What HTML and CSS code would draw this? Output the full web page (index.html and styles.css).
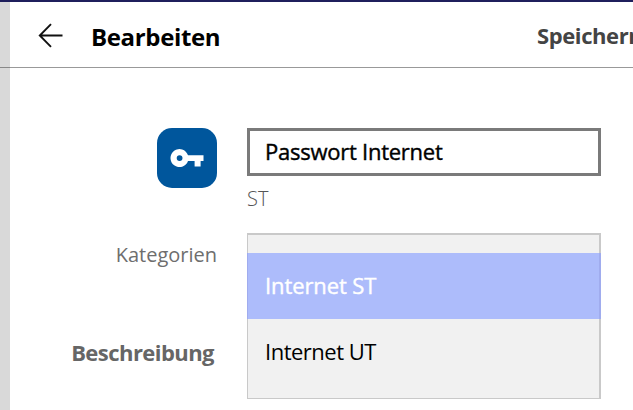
FILE: index.html
```
<!DOCTYPE html>
<html lang="de">
<head>
  <meta charset="UTF-8">
  <meta name="viewport" content="width=device-width, initial-scale=1.0">
  <title>Bearbeiten</title>
  <link rel="stylesheet" href="styles.css">
</head>
<body>
  <div class="app">
    <header class="header">
      <svg class="back" width="26" height="26" viewBox="0 0 26 26">
        <path d="M24.5 13.5H2M13 2.2L1.8 13.5L13 24.8"/>
      </svg>
      <h1>Bearbeiten</h1>
      <span class="save"><span>Speichern</span></span>
    </header>

    <main class="form">
      <div class="icon">
        <svg width="34" height="20" viewBox="0 0 34 20">
          <path fill-rule="evenodd" d="M18 7.2A9 9 0 1 0 18 13H24.6V18.6H30.6V13H33.5V7.2ZM9.6 7.2A2.9 2.9 0 1 1 9.6 13A2.9 2.9 0 1 1 9.6 7.2Z"/>
        </svg>
      </div>
      <div class="field">
        <div class="input"><span>Passwort Internet</span></div>
        <div class="hint"><span>ST</span></div>
      </div>

      <div class="labels">
        <div class="label"><span>Kategorien</span></div>
        <div class="label label-bold"><span>Beschreibung</span></div>
      </div>
      <div class="list">
        <div class="option selected"><span>Internet ST</span></div>
        <div class="option"><span>Internet UT</span></div>
      </div>
    </main>
  </div>
</body>
</html>
```

FILE: styles.css
```
* {
  box-sizing: border-box;
}
body {
  margin: 0;
  height: 410px;
  overflow: hidden;
  background: #fff;
  font-family: "Open Sans", "Noto Sans", sans-serif;
  border-top: 2px solid #1f1f5c;
}
.app {
  height: 408px;
  background: linear-gradient(to right, #d9d9d9 10px, #fff 10px);
}
.header {
  display: flex;
  height: 66px;
  padding-left: 38px;
  border-bottom: 1px solid rgba(70, 70, 70, .55);
  overflow: hidden;
}
.back {
  flex: none;
  margin-top: 20px;
  fill: none;
  stroke: #111;
  stroke-width: 1.9;
}
h1 {
  flex: none;
  width: 446px;
  margin: 0 0 0 27px;
  font-size: 24px;
  line-height: 70px;
  font-weight: 700;
  letter-spacing: -.35px;
  color: #000;
}
.save {
  flex: none;
  font-size: 22px;
  line-height: 67px;
  font-weight: 700;
  letter-spacing: -.4px;
  color: #444;
}
.form {
  display: grid;
  grid-template-columns: 217px 354px;
  grid-template-rows: 105px 166px;
  column-gap: 30px;
  padding-top: 60px;
}
.icon {
  display: flex;
  align-items: center;
  justify-content: center;
  justify-self: end;
  width: 60px;
  height: 60px;
  border-radius: 15px;
  background: #00569c;
}
.icon svg {
  fill: #fff;
}
.input {
  height: 48px;
  padding-left: 15px;
  border: 3px solid #7a7a7a;
  font-size: 22px;
  line-height: 41px;
  letter-spacing: -.25px;
  -webkit-text-stroke: .4px;
  color: #000;
}
.hint {
  font-size: 20px;
  line-height: 46px;
  font-weight: 300;
  color: #555;
}
.labels {
  text-align: right;
}
.label {
  height: 98px;
  font-size: 20px;
  line-height: 43px;
  color: #6e6e6e;
}
.label-bold {
  padding-right: 3px;
  font-size: 22px;
  font-weight: 700;
  letter-spacing: -.55px;
  color: #666;
}
.list {
  padding-top: 18px;
  border: solid #c9c9c9;
  border-width: 2px 2px 1px 1px;
  background: #f1f1f1;
}
.option {
  height: 66px;
  padding-left: 17px;
  font-size: 22px;
  line-height: 65px;
  letter-spacing: -.5px;
  color: #000;
}
.selected {
  margin: 0 -2px 0 -1px;
  border: solid #a0acee;
  border-width: 0 2px 0 1px;
  background: #adbcfb;
  letter-spacing: -.1px;
  -webkit-text-stroke: .4px;
  color: #fff;
}
```
